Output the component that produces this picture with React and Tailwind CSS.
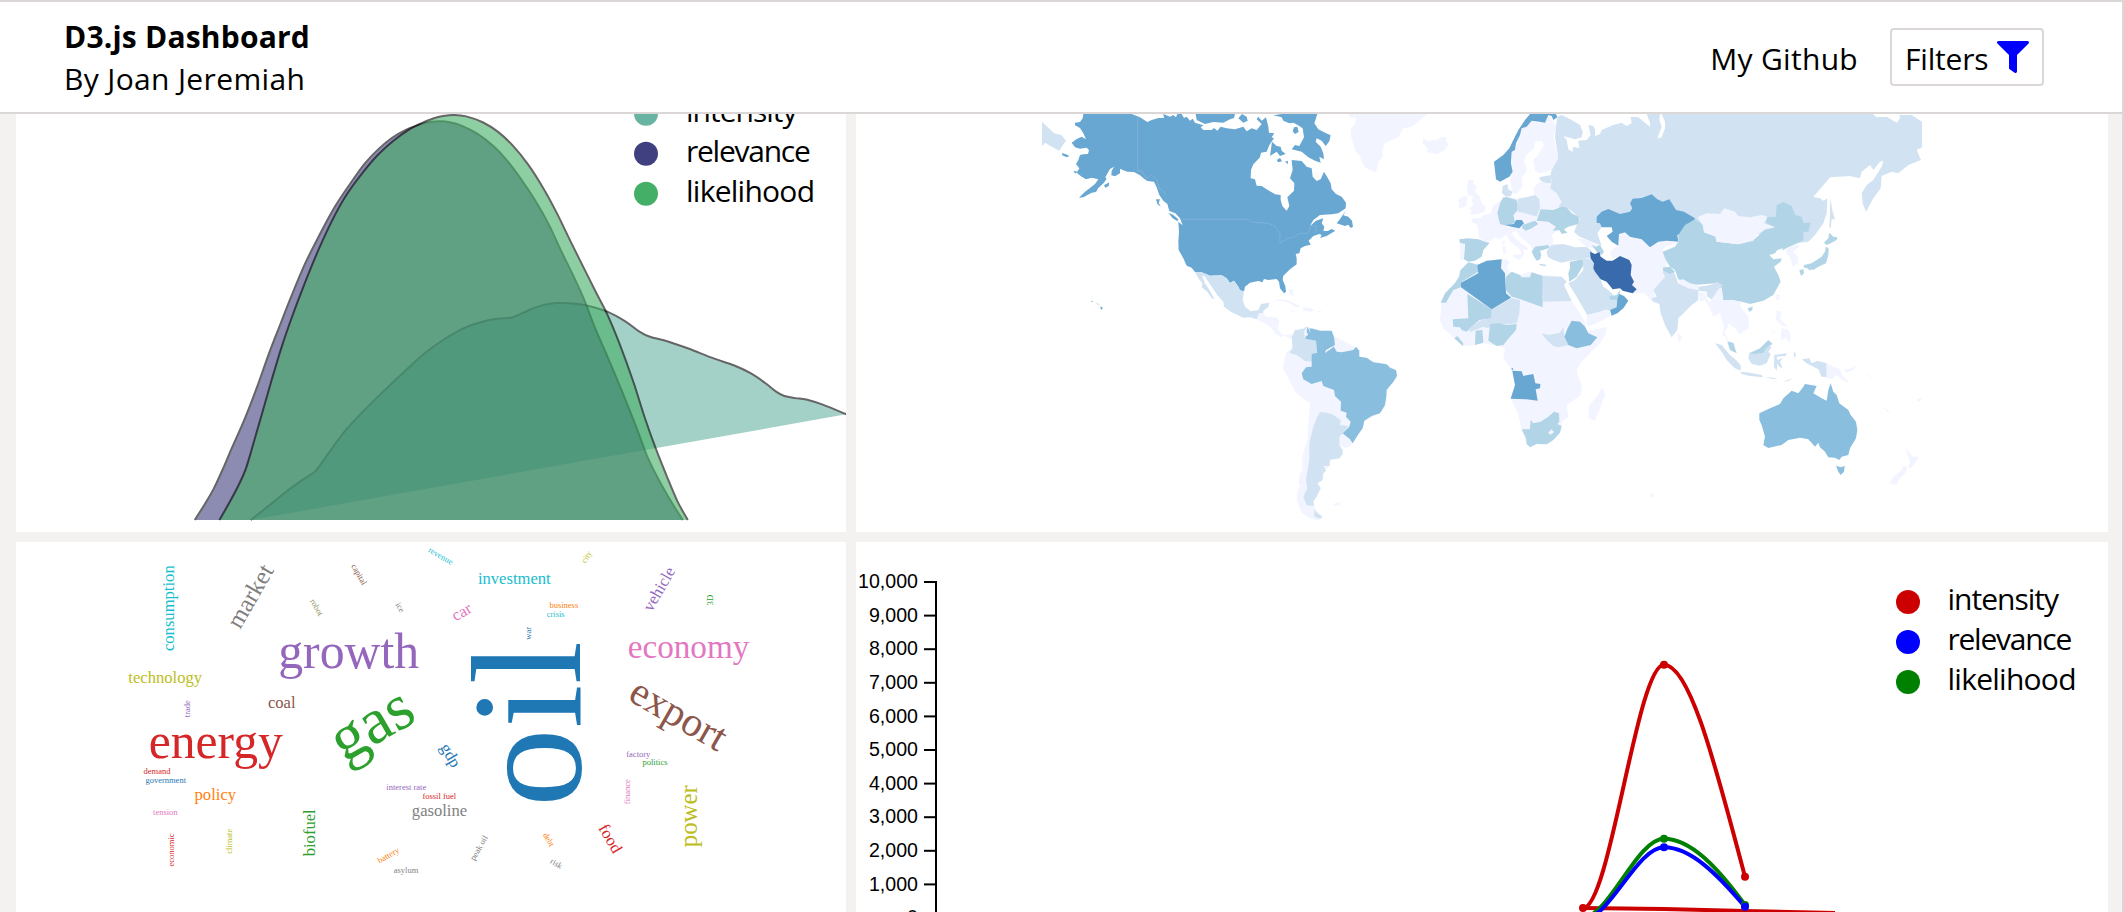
import { FaFilter } from "react-icons/fa";

const LIGHT = "#f2f4ff";
const PALE = "#d1e2f2";
const SOFT = "#b1d4e6";
const MID = "#89bedf";
const STRONG = "#68a7d2";
const DEEP = "#396aab";

// Countries of the western hemisphere, three units to a pixel.
const west = [
  [PALE, "36,65 72,100 95,106 108,122 98,136 88,152 68,142 46,128 36,138"],
  [STRONG, "160,42 158,55 150,66 135,68 135,76 150,84 160,100 168,118 155,110 140,117 125,128 135,142 150,146 170,143 177,150 174,162 160,163 150,165 145,180 138,192 148,205 140,218 152,228 168,238 185,233 205,238 195,252 180,264 165,275 147,293 160,292 185,278 198,276 205,264 222,248 230,236 226,232 240,207 253,200 245,212 244,226 255,229 270,220 270,206 278,210 292,215 312,216 330,226 342,236 352,243 372,245 380,262 388,285 400,302 412,312 418,333 436,340 450,355 458,376 445,365 447,395 445,425 446,450 460,475 470,497 485,503 495,516 515,517 540,527 575,526 590,535 600,549 612,542 625,560 630,571 642,574 645,560 660,548 685,543 697,547 702,537 715,540 740,537 747,545 750,565 762,580 768,575 766,558 758,540 760,527 780,508 800,493 800,475 797,462 808,460 812,445 825,438 842,434 836,422 850,408 868,402 875,405 870,414 890,408 916,392 905,387 893,393 880,393 883,380 875,370 880,355 858,362 840,378 850,360 870,345 905,343 925,340 947,325 948,308 935,290 918,282 905,268 902,250 892,232 882,215 872,238 860,243 848,230 845,205 830,200 815,183 785,180 788,210 780,235 793,250 792,272 772,292 778,318 770,332 757,318 752,300 752,285 735,283 710,268 695,258 680,257 675,238 662,235 663,210 670,193 690,172 693,158 710,155 718,135 732,115 725,112 733,100 717,98 715,80 708,52 695,62 685,50 680,58 695,72 680,90 665,85 650,94 640,80 615,88 590,85 572,80 562,92 552,84 545,90 520,90 512,82 520,76 495,68 488,56 480,62 470,50 462,54 455,42 442,42 438,52 430,45 420,50 400,42 402,54 385,54 365,60 352,66 330,52 305,42"],
  [STRONG, "497,42 500,60 525,72 550,66 580,68 600,58 612,54 615,42"],
  [STRONG, "625,55 636,42 650,50 653,62 640,68"],
  [STRONG, "730,46 755,42 862,42 853,70 865,88 885,98 902,106 898,124 887,138 875,122 860,115 857,125 872,140 880,160 882,178 868,170 872,188 855,182 835,172 815,155 785,148 795,135 808,138 822,112 818,85 803,75 790,68 778,70 760,62 755,52"],
  [STRONG, "792,82 802,80 806,96 795,102 788,94"],
  [STRONG, "726,125 740,138 752,140 755,152 767,162 750,168 740,155 720,168"],
  [STRONG, "740,180 750,174 756,184 745,187"],
  [STRONG, "765,185 774,182 773,193"],
  [STRONG, "948,330 940,346 955,350 966,362 969,380 962,384 955,374 945,378 920,370 932,355"],
  [STRONG, "415,338 430,345 445,358 443,364 428,355"],
  [STRONG, "378,298 390,298 386,308 392,320 382,312"],
  [STRONG, "222,256 238,247 236,258 226,263"],
  [STRONG, "96,159 108,163 118,168 110,172 97,166"],
  [STRONG, "130,214 142,214 137,221"],
  [STRONG, "211,619 219,624 213,630"],
  [STRONG, "183,602 189,604 186,607"],
  [PALE, "195,607 210,613 206,616"],
  [PALE, "495,516 515,517 540,527 575,526 590,535 600,549 612,542 625,560 630,571 642,574 638,600 645,620 662,634 685,630 693,612 718,608 715,620 700,632 700,640 688,640 680,658 662,652 640,653 605,637 582,620 580,605 562,585 545,560 525,530 516,526 525,550 540,572 553,597 545,595 532,575 515,562 517,550 505,535"],
  [LIGHT, "680,658 690,640 700,640 707,650 742,653 748,665 743,688 758,705 785,703 788,712 780,716 765,708 752,710 735,700 722,680 700,668"],
  [LIGHT, "733,604 750,598 775,602 800,613 812,621 795,620 775,607 755,602"],
  [LIGHT, "820,622 842,624 853,632 840,635 820,632"],
  [LIGHT, "782,633 795,634 792,638"],
  [LIGHT, "860,633 875,633 872,637"],
  [LIGHT, "775,567 790,570 788,588 780,582"],
  [LIGHT, "830,680 870,690 905,693 915,710 970,738 985,768 1030,785 1070,793 1100,812 1098,835 1070,870 1065,920 1050,940 1003,962 998,985 968,1028 960,1040 945,1043 928,1035 938,1060 928,1075 900,1078 898,1098 880,1115 862,1150 872,1165 850,1205 855,1228 878,1252 865,1260 845,1258 815,1238 803,1210 800,1185 810,1155 805,1150 810,1118 818,1112 817,1070 832,1020 840,910 825,900 798,878 770,825 758,803 768,760 785,745 790,700"],
  [PALE, "832,678 822,695 825,715 858,722 862,760 845,765 846,785 825,783 800,765 778,758 788,745 785,712 795,690 820,686"],
  [MID, "832,680 830,695 835,705 828,708 826,716 858,722 862,762 885,765 885,752 908,738 915,735 912,712 905,692 870,692 848,686 838,685 842,700"],
  [MID, "845,762 862,758 880,765 890,755 912,740 920,755 935,757 970,750 978,740 988,752 988,770 1010,773 1030,787 1070,793 1080,803 1098,810 1101,828 1090,845 1070,870 1069,890 1065,915 1050,940 1025,948 1003,962 998,985 985,1003 968,1030 960,1018 938,1000 958,980 962,965 948,950 950,938 932,932 933,905 915,888 912,870 880,858 875,843 845,852 820,838 815,820 828,802 845,800"],
  [PALE, "870,936 890,938 905,942 932,960 930,975 955,978 938,1000 928,1010 928,1035 938,1050 938,1063 928,1075 900,1080 898,1098 880,1098 888,1112 880,1120 878,1140 862,1150 872,1165 860,1190 850,1203 852,1218 830,1215 820,1190 832,1165 828,1140 838,1080 838,1030 850,980 862,950"],
  [PALE, "853,1228 862,1240 878,1250 870,1256 853,1250"],
  [LIGHT, "908,1212 930,1207 932,1214 915,1218"],
  [LIGHT, "955,42 1190,42 1165,65 1145,80 1120,85 1105,112 1065,130 1057,152 1058,170 1045,185 1038,217 1025,212 1003,200 990,170 975,150 970,130 963,110 962,85 975,72 978,52 965,55"],
];

const westBorders =
  "M323,48V214L335,212L350,235L365,224L380,240L390,268L402,275L405,285 M457,358H655L665,366L715,370L735,380L750,400V430L770,415L790,412L808,400H835L842,378H858V398 M862,762L885,765L885,740L912,738";

// Countries of the eastern hemisphere, three units to a pixel.
const east = [
  [LIGHT, "10,115 20,122 50,120 62,112 78,112 78,122 85,135 75,150 50,163 20,155 25,145 8,130"],
  [LIGHT, "145,240 163,240 158,252 170,258 165,275 180,290 185,310 197,320 193,335 175,342 150,345 155,332 148,325 160,315 155,300 160,290 145,285 140,262"],
  [LIGHT, "125,290 143,288 140,300 138,318 115,327 118,310 113,302"],
  [LIGHT, "235,305 218,318 212,340 190,346 180,355 155,355 155,365 172,375 178,415 205,430 210,422 225,412 240,418 258,405 264,415 275,430 292,440 303,455 301,470 308,472 312,458 308,448 324,450 322,442 302,430 283,412 275,398 290,393 297,408 315,422 333,438 337,452 342,460 362,445 385,437 398,440 400,420 395,405 410,395 440,380 425,305 410,280 390,265 392,240 360,245 340,265 345,288 325,292 295,296 262,290"],
  [LIGHT, "277,465 300,463 303,470 301,480 283,473"],
  [LIGHT, "248,438 257,438 257,460 249,462"],
  [LIGHT, "250,420 255,425 252,435 246,430"],
  [LIGHT, "118,415 132,430 132,478 122,480 120,450"],
  [LIGHT, "305,85 335,62 355,68 375,65 385,45 398,60 408,80 400,110 415,175 395,210 360,220 345,212 340,180 355,165 372,135 365,123 345,125 342,145 318,165 312,185 322,210 305,235 308,258 290,282 278,278 270,240 278,215 275,155 285,150"],
  [STRONG, "330,42 408,42 412,52 400,60 395,48 385,45 375,68 358,65 335,62 320,80 305,85 300,105 288,130 285,150 275,155 273,190 278,215 268,230 240,245 228,238 222,185 250,165 268,145 280,120 295,90 315,60"],
  [LIGHT, "474,414 500,420 520,430 545,438 520,445 500,440 480,425"],
  [PALE, "412,50 425,45 455,60 480,75 488,95 485,112 465,118 430,108 440,120 445,148 458,155 460,140 478,145 475,122 500,120 512,105 505,75 520,78 525,90 525,108 540,102 545,90 580,75 605,68 620,78 635,70 632,50 655,52 690,80 690,68 680,42 720,42 718,60 725,80 712,115 725,112 735,85 735,65 725,42 1358,42 1370,52 1400,50 1430,68 1440,55 1438,45 1475,45 1506,65 1506,142 1490,150 1503,180 1465,195 1435,220 1415,215 1385,228 1382,265 1360,295 1338,335 1328,310 1325,280 1340,255 1360,240 1385,200 1390,182 1380,185 1360,210 1350,195 1325,215 1320,235 1290,228 1230,232 1205,262 1180,290 1200,295 1210,302 1222,295 1220,340 1210,370 1185,405 1165,425 1140,428 1000,400 820,370 780,380 620,420 560,360 532,400 545,437 515,425 475,408 462,395 480,355 440,322 415,322 425,305 410,280 390,265 395,245 392,220 395,210 415,175 405,110 408,80"],
  [PALE, "1231,295 1238,335 1245,358 1235,358 1232,385 1228,380 1230,345"],
  [PALE, "358,232 392,225 395,250 375,248 360,240"],
  [PALE, "248,258 262,252 265,268 278,275 272,288 258,290 246,280"],
  [PALE, "295,296 325,290 345,285 358,298 360,325 350,350 335,345 295,335 290,315"],
  [SOFT, "250,292 262,292 290,300 293,330 280,345 285,368 262,378 240,372 232,340 240,310"],
  [STRONG, "258,375 282,372 288,360 305,360 312,370 298,385 275,380"],
  [SOFT, "308,375 345,362 355,372 335,385 318,392 306,385"],
  [SOFT, "362,328 400,330 425,320 440,322 455,340 478,352 475,372 445,380 432,388 442,398 425,402 418,390 398,392 408,380 385,365 350,362"],
  [SOFT, "118,418 145,415 175,418 208,430 190,450 185,470 165,482 145,485 132,478 135,432 120,428"],
  [SOFT, "345,440 385,435 388,443 370,450 360,452 364,465 360,478 350,482 342,470 335,455"],
  [SOFT, "358,492 378,494 375,498 360,496"],
  [PALE, "388,440 400,434 430,432 465,442 500,441 515,452 520,470 490,478 450,482 425,488 400,480 383,470 380,455"],
  [SOFT, "515,435 528,440 540,435 552,455 545,465 530,455"],
  [LIGHT, "597,402 615,397 630,410 665,418 690,442 715,425 740,422 775,428 735,440 728,455 745,490 730,510 735,530 700,570 710,610 695,605 675,580 640,580 632,545 632,485 600,468 578,475 570,460 580,445 597,437"],
  [STRONG, "530,350 545,335 565,327 600,342 630,335 637,325 630,310 638,296 665,294 695,283 712,298 728,305 748,298 768,330 792,335 825,355 818,375 795,378 790,400 772,405 775,425 740,422 715,425 690,442 665,418 630,410 615,397 597,402 595,437 575,425 560,408 578,395 575,382 545,382 540,370 530,368"],
  [SOFT, "450,485 488,478 490,495 470,530 448,545 445,520 450,505"],
  [PALE, "488,478 515,475 530,510 542,540 550,560 565,570 595,600 590,625 555,635 530,638 502,645 490,625 470,590 445,550 465,540 490,510"],
  [LIGHT, "502,645 530,638 560,628 575,645 545,662 505,680 498,665"],
  [SOFT, "567,590 590,585 600,570 598,598 572,600"],
  [STRONG, "598,582 612,588 625,602 610,625 592,640 575,647 570,630 590,622 592,598"],
  [DEEP, "510,455 525,462 538,456 542,470 560,482 578,482 600,468 628,480 635,495 632,525 642,545 636,555 650,568 638,580 608,572 600,565 578,568 560,545 542,538 525,515 520,505 522,490 512,475"],
  [PALE, "735,500 762,515 770,538 775,550 810,565 835,570 835,600 815,615 775,655 772,690 755,712 735,675 722,640 718,612 700,605 695,595 710,590 700,570 735,530 728,515"],
  [SOFT, "728,503 750,500 765,515 750,522 730,512"],
  [SOFT, "775,405 795,375 825,358 850,375 852,397 888,410 890,425 955,433 1000,420 1035,390 1065,382 1038,368 1042,352 1068,350 1070,315 1090,306 1115,318 1125,345 1145,350 1150,368 1172,368 1165,395 1150,395 1150,420 1135,428 1105,442 1085,452 1090,445 1072,450 1065,460 1048,465 1060,478 1085,475 1082,485 1062,500 1075,525 1082,545 1060,585 1030,602 990,612 965,605 935,600 910,605 905,575 895,548 860,552 820,555 775,538 765,510 750,500 735,475 728,455 765,440 775,425"],
  [SOFT, "983,625 998,620 997,630 988,635"],
  [LIGHT, "832,352 860,340 900,342 912,325 945,335 955,348 990,352 1025,345 1042,350 1032,370 1065,382 1035,388 1010,405 1000,422 955,433 920,428 890,425 885,408 852,395 848,375"],
  [LIGHT, "775,540 790,538 810,550 835,555 832,570 805,565 778,552"],
  [PALE, "835,560 870,555 890,545 908,555 890,575 878,600 862,590 860,575 835,572"],
  [LIGHT, "835,575 858,580 862,600 870,605 880,590 890,575 905,560 910,600 935,600 965,605 960,618 985,650 987,685 958,703 945,685 925,670 920,690 912,695 925,720 942,730 945,750 928,740 920,715 908,705 912,680 900,640 880,650 870,625 855,600 840,605"],
  [SOFT, "922,725 940,728 945,745 950,760 930,750"],
  [LIGHT, "772,698 785,710 785,720 775,725"],
  [LIGHT, "1098,448 1135,430 1138,440 1120,455 1132,470 1135,490 1118,500 1112,475 1100,462"],
  [SOFT, "1228,398 1240,410 1252,412 1250,420 1232,430 1220,435 1212,428 1225,415"],
  [SOFT, "1218,440 1226,445 1225,465 1218,490 1195,500 1180,510 1150,502 1152,495 1175,490 1190,480 1205,470 1215,455"],
  [SOFT, "1138,510 1150,508 1152,520 1143,528"],
  [SOFT, "1160,502 1175,502 1170,512"],
  [LIGHT, "1070,583 1080,585 1075,602 1068,598"],
  [LIGHT, "1070,632 1085,635 1080,655 1090,668 1105,682 1085,675 1068,658"],
  [LIGHT, "1085,685 1105,690 1112,705 1110,728 1098,715 1082,720"],
  [LIGHT, "1050,705 1065,690 1062,698"],
  [PALE, "885,730 905,735 930,765 948,780 962,795 962,812 945,805 920,780 905,755"],
  [PALE, "960,815 990,818 1025,825 1030,832 990,828 965,822"],
  [PALE, "1035,832 1060,833 1075,838 1055,836"],
  [PALE, "1090,845 1118,835 1105,843"],
  [PALE, "988,758 1005,760 1025,745 1045,735 1055,740 1045,755 1052,762 1040,790 1020,797 995,792 985,775"],
  [SOFT, "988,760 1020,745 1045,720 1058,732 1040,742 1030,758 1005,762"],
  [PALE, "1063,765 1100,760 1098,768 1070,770 1072,780 1088,775 1080,785 1088,805 1078,800 1072,790 1070,812 1062,800"],
  [PALE, "1120,755 1128,762 1124,775"],
  [PALE, "1145,778 1168,775 1175,790 1192,782 1220,790 1220,832 1205,830 1195,808 1160,790"],
  [LIGHT, "1220,790 1245,802 1260,808 1268,828 1290,848 1270,842 1250,825 1235,838 1220,835"],
  [LIGHT, "1270,810 1295,805 1308,795 1300,810 1280,818"],
  [LIGHT, "1320,810 1345,825 1370,840 1350,830"],
  [LIGHT, "1390,920 1410,935 1402,935"],
  [LIGHT, "1408,880 1414,892 1409,888"],
  [LIGHT, "1488,900 1506,892 1500,905"],
  [MID, "1018,940 1050,925 1080,912 1090,895 1115,872 1135,880 1150,860 1155,852 1190,858 1180,880 1205,895 1220,902 1225,870 1232,850 1240,875 1250,885 1258,910 1285,930 1292,945 1308,965 1312,990 1308,1015 1290,1045 1285,1065 1265,1070 1258,1080 1245,1073 1225,1072 1215,1055 1200,1042 1195,1028 1185,1040 1165,1018 1140,1013 1105,1020 1085,1035 1045,1044 1030,1035 1035,1010 1025,975 1018,960"],
  [MID, "1248,1097 1262,1102 1274,1098 1272,1115 1262,1125 1255,1115"],
  [LIGHT, "1455,1040 1465,1055 1478,1070 1495,1070 1490,1082 1472,1105 1465,1100 1470,1085 1465,1070"],
  [LIGHT, "1450,1098 1463,1102 1455,1120 1440,1135 1428,1155 1408,1150 1420,1130 1440,1115"],
  [LIGHT, "690,1180 702,1183 698,1190 690,1190"],
  [LIGHT, "148,487 175,492 245,478 262,478 268,490 260,500 270,515 300,525 330,515 370,525 425,530 438,545 430,555 445,590 460,610 480,640 497,670 500,692 530,688 560,682 558,700 540,730 510,760 485,785 470,810 475,830 485,855 483,885 440,915 445,950 425,965 425,985 405,1015 380,1033 350,1032 330,1042 320,1030 305,988 295,945 272,895 285,855 275,810 250,775 255,745 240,738 215,735 190,728 165,735 130,738 100,712 70,685 60,660 65,610 95,560 120,520"],
  [LIGHT, "548,860 555,885 540,925 525,962 505,955 508,915 530,890"],
  [SOFT, "145,487 175,495 175,515 150,530 125,545 122,562 100,570 88,590 78,608 62,608 75,580 105,550 118,530 120,512"],
  [SOFT, "258,530 275,515 300,525 305,532 330,532 335,517 368,528 368,622 300,597 275,590 258,570"],
  [PALE, "368,528 425,530 440,545 432,555 455,603 370,605"],
  [SOFT, "142,582 215,628 215,655 178,660 155,680 140,695 125,690 120,682 100,680 98,658 145,655"],
  [PALE, "215,628 275,595 300,600 298,640 290,670 215,675 205,685 190,680 165,690 150,697 148,685 170,670 185,660 215,655"],
  [STRONG, "172,495 200,482 245,478 243,505 255,520 258,580 273,593 215,628 123,562 123,548 175,520"],
  [SOFT, "210,672 235,670 260,675 290,672 288,690 270,710 250,735 230,738 205,722"],
  [SOFT, "167,692 187,690 190,728 165,735"],
  [SOFT, "103,715 112,708 130,730 128,738"],
  [PALE, "365,700 385,705 420,698 430,680 433,712 445,735 415,742 400,738 380,720"],
  [MID, "455,662 480,665 495,680 505,700 532,712 512,735 470,745 445,735 433,710 443,685"],
  [STRONG, "277,812 305,814 310,828 340,822 346,850 361,852 360,865 347,868 353,902 320,898 272,896 285,855"],
  [STRONG, "273,806 280,804 278,811"],
  [SOFT, "332,960 340,970 362,965 385,950 402,935 417,940 418,965 412,972 425,978 420,998 400,1020 380,1033 350,1032 330,1042 320,1032 318,1015 305,988 330,988"],
  [LIGHT, "385,997 395,988 402,997 390,1005"],
];

const series = {
  intensity: [[457,1510],[485,1475],[520,1430],[550,1395],[575,1368],[595,1325],[630,1250],[665,1190],[700,1135],[740,1075],[775,1025],[810,985],[850,950],[885,932],[910,925],[935,921],[965,900],[990,886],[1015,880],[1045,881],[1075,889],[1107,905],[1140,933],[1165,962],[1185,978],[1215,990],[1255,1012],[1300,1040],[1340,1062],[1370,1085],[1395,1112],[1415,1137],[1430,1150],[1450,1156],[1470,1160],[1500,1175],[1543,1203]],
  relevance: [[355,1510],[373,1465],[390,1418],[406,1363],[423,1300],[446,1217],[470,1118],[490,1028],[512,938],[530,865],[555,770],[580,690],[610,602],[640,530],[665,475],[690,433],[715,400],[740,377],[765,362],[785,354],[803,352],[820,355],[840,364],[870,388],[900,425],[925,467],[950,520],[975,580],[1000,650],[1022,725],[1045,800],[1065,870],[1085,953],[1110,1045],[1135,1140],[1160,1240],[1180,1325],[1200,1390],[1225,1460],[1245,1510]],
  likelihood: [[400,1510],[418,1460],[434,1412],[448,1362],[462,1288],[477,1205],[495,1105],[513,1010],[532,922],[555,825],[580,728],[605,642],[630,570],[657,510],[687,453],[718,408],[745,377],[768,358],[790,344],[808,337],[828,334],[850,338],[880,355],[908,383],[935,423],[963,478],[990,545],[1015,618],[1040,700],[1065,780],[1087,850],[1107,912],[1130,1000],[1155,1110],[1175,1210],[1195,1300],[1215,1380],[1235,1455],[1254,1510]],
};

function smooth(points) {
  const at = (i) => points[Math.max(0, Math.min(points.length - 1, i))];
  let d = `M${points[0]}`;
  for (let i = 0; i < points.length - 1; i++) {
    const [a, b, c, e] = [at(i - 1), at(i), at(i + 1), at(i + 2)];
    d += `C${b[0] + (c[0] - a[0]) / 6},${b[1] + (c[1] - a[1]) / 6} ${c[0] - (e[0] - b[0]) / 6},${c[1] - (e[1] - b[1]) / 6} ${c[0]},${c[1]}`;
  }
  return d;
}

const BLUE = "#1f77b4", ORANGE = "#ff7f0e", GREEN = "#2ca02c", RED = "#d62728", PURPLE = "#9467bd";
const BROWN = "#8c564b", PINK = "#e377c2", GRAY = "#7f7f7f", OLIVE = "#bcbd22", CYAN = "#17becf";

// word, x, baseline y, size, rotation, colour
const words = [
  ["oil", 579.7, 723.8, 157.5, -90, BLUE],
  ["gas", 381.4, 741.4, 65, -30, GREEN],
  ["growth", 348.7, 667.7, 49.8, 0, PURPLE],
  ["energy", 215.8, 758.2, 49.6, 0, RED],
  ["export", 672, 725.6, 41.2, 30, BROWN],
  ["economy", 688.5, 658.3, 33.2, 0, PINK],
  ["market", 257.2, 600.2, 24.8, -60, GRAY],
  ["power", 696.7, 816.2, 24.9, -90, OLIVE],
  ["technology", 165.2, 683, 16.6, 0, OLIVE],
  ["consumption", 173.7, 608.2, 16.6, -90, CYAN],
  ["coal", 281.7, 708, 16.6, 0, BROWN],
  ["policy", 215.3, 800, 16.6, 0, ORANGE],
  ["gasoline", 439.5, 816, 16.6, 0, GRAY],
  ["investment", 514.3, 584, 16.6, 0, CYAN],
  ["car", 464.3, 616.5, 16.6, -30, PINK],
  ["vehicle", 663.7, 591.7, 16.6, -60, PURPLE],
  ["biofuel", 315, 832.8, 16.6, -90, GREEN],
  ["gdp", 446, 758, 16.6, 60, BLUE],
  ["food", 605.7, 841.2, 16.6, 60, RED],
  ["robot", 314.3, 608.7, 8.5, 60, "#8b8f55"],
  ["capital", 356.7, 575.7, 8.5, 60, BROWN],
  ["ice", 397.7, 608.7, 8.5, 60, GRAY],
  ["revenue", 439.3, 558.3, 8.5, 30, CYAN],
  ["trade", 190, 708.7, 8.5, -90, PURPLE],
  ["demand", 157, 774.3, 8.5, 0, RED],
  ["government", 165.7, 782.7, 8.5, 0, BLUE],
  ["tension", 165.3, 815.3, 8.5, 0, PINK],
  ["economic", 173.7, 850, 8.5, -90, RED],
  ["climate", 232, 841.3, 8.5, -90, OLIVE],
  ["interest rate", 406.3, 790.3, 8.5, 0, PURPLE],
  ["fossil fuel", 439.3, 799.3, 8.5, 0, RED],
  ["battery", 389.7, 857.7, 8.5, -30, ORANGE],
  ["asylum", 406, 873.3, 8.5, 0, GRAY],
  ["peak oil", 481.3, 849.3, 8.5, -60, GRAY],
  ["city", 589, 558.3, 8.5, -60, OLIVE],
  ["3D", 713, 600, 8.8, -90, GREEN],
  ["business", 563.8, 607.7, 8.5, 0, ORANGE],
  ["crisis", 555.7, 616.7, 8.5, 0, CYAN],
  ["war", 531, 633.3, 8.5, -90, BLUE],
  ["factory", 638.3, 757.3, 8.5, 0, PURPLE],
  ["politics", 655, 765.3, 8.5, 0, GREEN],
  ["finance", 630.3, 791.7, 8.5, -90, PINK],
  ["debt", 546.3, 841, 8.5, 60, ORANGE],
  ["risk", 555, 866, 8.5, 30, GRAY],
];

function Legend({ cx, tx, top, colors }) {
  const names = [["intensity", 111.5], ["relevance", 124.8], ["likelihood", 129]];
  return names.map(([name, width], i) => (
    <g key={name}>
      <circle cx={cx} cy={top + i * 40} r="12" fill={colors[i]} />
      <text x={tx} y={top + 7.7 + i * 40} textLength={width} fontSize="30" className="font-['Open_Sans',sans-serif]">
        {name}
      </text>
    </g>
  ));
}

function Shapes({ items }) {
  return items.map(([fill, points], i) => <polygon key={i} points={points} fill={fill} />);
}

function DensityChart() {
  const styles = { intensity: "#69b3a2", relevance: "#404080", likelihood: "#44af67" };
  return (
    <svg className="block h-full w-full" viewBox="16 114 830 418">
      <g transform="scale(0.54847 0.34439)">
        {Object.entries(styles).map(([name, fill]) => (
          <path key={name} d={smooth(series[name])} fill={fill} stroke="#000" strokeWidth="2" opacity="0.6" vectorEffect="non-scaling-stroke" strokeLinejoin="round" />
        ))}
      </g>
      <Legend cx={646} tx={686} top={113.8} colors={["#69b3a2", "#404080", "#44af67"]} />
    </svg>
  );
}

function WorldMap() {
  return (
    <svg className="block h-full w-full" viewBox="856 114 1252 418">
      <g transform="translate(1030 100) scale(0.33333)">
        <Shapes items={west} />
        <path d={westBorders} fill="none" stroke="#86b8db" strokeWidth="2" />
      </g>
      <g transform="translate(1420 100) scale(0.33333)">
        <Shapes items={east} />
      </g>
    </svg>
  );
}

function WordCloud() {
  return (
    <svg className="block h-full w-full font-['Liberation_Serif',serif]" viewBox="16 542 830 370">
      {words.map(([text, x, y, size, angle, color]) => (
        <text key={text} transform={`translate(${x} ${y}) rotate(${angle})`} fontSize={size} fill={color} textAnchor="middle">
          {text}
        </text>
      ))}
    </svg>
  );
}

function LineChart() {
  const ticks = ["10,000", "9,000", "8,000", "7,000", "6,000", "5,000", "4,000", "3,000", "2,000", "1,000", "0"];
  return (
    <svg className="block h-full w-full" viewBox="856 542 1252 370">
      <g fontSize="19.6" textAnchor="end" className="font-['Liberation_Sans',sans-serif]">
        {ticks.map((label, i) => (
          <g key={label}>
            <path d={`M924,${582 + i * 33.6}H936`} stroke="#000" strokeWidth="2" />
            <text x="918" y={588.2 + i * 33.6}>{label}</text>
          </g>
        ))}
      </g>
      <path d="M936,581V912" stroke="#000" strokeWidth="2" />
      <g fill="none" strokeWidth="4">
        <path d="M1583,908L1664,909L1745,911L1835,913" stroke="#c00" />
        <path d="M1583,908C1610,908.5 1637,664.7 1664,664.7C1691,664.7 1718,776 1745,876.7" stroke="#c00" />
        <path d="M1583,918C1610,915 1637,838.7 1664,838.7C1691,838.7 1718,868 1745,905" stroke="#008000" />
        <path d="M1583,920C1610,918 1637,847.3 1664,847.3C1691,847.3 1718,875 1745,906.7" stroke="#00f" />
      </g>
      <g fill="#c00">
        <circle cx="1583" cy="908" r="4" />
        <circle cx="1664" cy="664.7" r="4" />
        <circle cx="1745" cy="876.7" r="4" />
      </g>
      <circle cx="1664" cy="838.7" r="4" fill="#008000" />
      <circle cx="1745" cy="905" r="4" fill="#008000" />
      <circle cx="1664" cy="847.3" r="4" fill="#00f" />
      <circle cx="1745" cy="906.7" r="4" fill="#00f" />
      <Legend cx={1908} tx={1947.5} top={602} colors={["#c00", "#00f", "#008000"]} />
    </svg>
  );
}

export default function App() {
  return (
    <div className="flex h-[912px] w-[2124px] flex-col overflow-hidden border-t-2 border-r-2 border-[#dcd7d7] bg-[#f3f2f0] font-['Open_Sans',sans-serif] text-[30px] text-black">
      <header className="flex h-28 shrink-0 items-center justify-between border-b-2 border-[#dcd7d7] bg-white pr-[78px] pl-16">
        <div className="pt-0.5 leading-[42px]">
          <h1 className="font-bold tracking-[0.2px]">D3.js Dashboard</h1>
          <p className="tracking-[0.35px]">By Joan Jeremiah</p>
        </div>
        <nav className="flex items-center gap-8">
          <a href="#github" className="pt-0.5 tracking-[0.3px]">My Github</a>
          <button className="flex h-[58px] w-[154px] items-center justify-between rounded-sm border-2 border-[#dcd7d7] px-[13px]">
            <span className="pt-0.5 tracking-[-0.2px]">Filters</span>
            <FaFilter className="text-[32px] text-[#00f]" />
          </button>
        </nav>
      </header>
      <main className="grid shrink-0 grid-cols-[830px_1252px] grid-rows-[418px_370px] gap-2.5 pl-4">
        <section className="bg-white"><DensityChart /></section>
        <section className="bg-white"><WorldMap /></section>
        <section className="bg-white"><WordCloud /></section>
        <section className="bg-white"><LineChart /></section>
      </main>
    </div>
  );
}
